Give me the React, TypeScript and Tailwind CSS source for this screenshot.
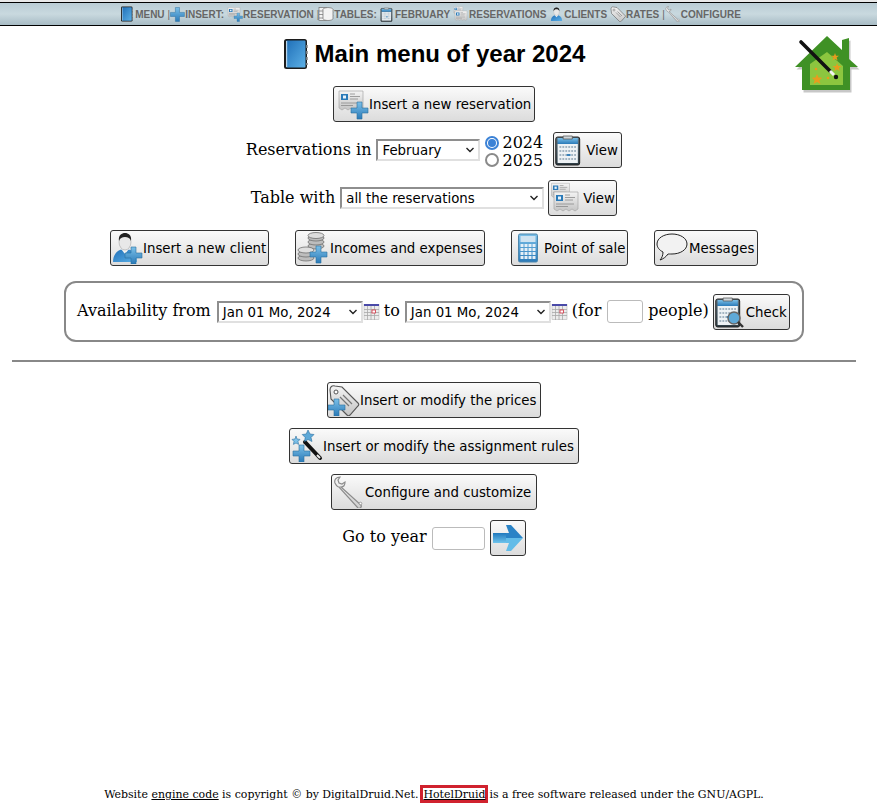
import React from "react";

type P = { s?: number; className?: string };

const Defs = () => (
  <svg width="0" height="0" className="absolute">
    <defs>
      <linearGradient id="blue" x1="0" y1="0" x2="0" y2="1">
        <stop offset="0" stopColor="#7cc0e8" />
        <stop offset="1" stopColor="#2a7ab8" />
      </linearGradient>
      <linearGradient id="book" x1="0" y1="0" x2="1" y2="1">
        <stop offset="0" stopColor="#1f6fb8" />
        <stop offset="1" stopColor="#5cb0e6" />
      </linearGradient>
      <linearGradient id="paper" x1="0" y1="0" x2="0" y2="1">
        <stop offset="0" stopColor="#f4f4f4" />
        <stop offset="1" stopColor="#c4c4c4" />
      </linearGradient>
      <linearGradient id="steel" x1="0" y1="0" x2="1" y2="1">
        <stop offset="0" stopColor="#f6f6f6" />
        <stop offset="1" stopColor="#cdcdcd" />
      </linearGradient>
      <linearGradient id="arrowG" x1="0" y1="0" x2="0" y2="1">
        <stop offset="0" stopColor="#1f78bd" />
        <stop offset="1" stopColor="#6fc4ec" />
      </linearGradient>
      <linearGradient id="body" x1="0" y1="0" x2="0" y2="1">
        <stop offset="0" stopColor="#5f7480" />
        <stop offset="1" stopColor="#2e3c44" />
      </linearGradient>
    </defs>
  </svg>
);

const Svg = ({ s = 32, className, children }: P & { children: React.ReactNode }) => (
  <svg width={s} height={s} viewBox="0 0 32 32" className={"shrink-0 " + (className ?? "")}>
    {children}
  </svg>
);

const Plus = ({ x = 0, y = 0, k = 1 }: { x?: number; y?: number; k?: number }) => (
  <g transform={`translate(${x} ${y}) scale(${k})`}>
    <path
      d="M6 0h5v6h6v5h-6v6H6v-6H0V6h6z"
      fill="url(#blue)"
      stroke="#2a6f9f"
      strokeWidth="0.6"
    />
  </g>
);

const Ticket = ({ x = 0, y = 0 }: { x?: number; y?: number }) => (
  <g transform={`translate(${x} ${y})`}>
    <path
      d="M1 1h24v17l-3 2-3-2-3 2-3-2-3 2-3-2-3 2-3-2z"
      fill="url(#paper)"
      stroke="#a8a8a8"
      strokeWidth="0.7"
    />
    <rect x="3" y="4" width="7" height="6" fill="#2a7ab8" />
    <rect x="5" y="5.5" width="3" height="3" fill="#e8f2fa" />
    <path d="M12 4h5M12 6.5h10M12 9h8M3 13h18M3 15.5h12" stroke="#8a8a8a" strokeWidth="0.8" />
  </g>
);

const BookGlyph = () => (
  <>
    <rect x="4" y="1" width="23" height="30" rx="2.5" fill="#1c1c1c" />
    <rect x="6" y="2.5" width="19.5" height="27" rx="1" fill="url(#book)" />
    <path d="M6.600 3v26" stroke="#b8d6ec" strokeWidth="1.2" />
    <path d="M27 7v3M27 13v3M27 19v3M27 25v2" stroke="#8d8d8d" strokeWidth="1.6" />
  </>
);
const IconBook = (p: P) => <Svg {...p}><BookGlyph /></Svg>;
const IconPlus = (p: P) => <Svg {...p}><Plus x={1} y={1} k={1.75} /></Svg>;

const IconNewRes = (p: P) => (
  <Svg {...p}>
    <Ticket x={1} y={2} />
    <Plus x={14} y={14} />
  </Svg>
);

const IconRes = (p: P) => (
  <Svg {...p}>
    <g transform="translate(0 -1) scale(.75)"><Ticket x={1} y={2} /></g>
    <Ticket x={3} y={9} />
  </Svg>
);

const IconTable = (p: P) => (
  <Svg {...p}>
    <g fill="#f3f3f3" stroke="#6f6f6f" strokeWidth="1.400">
      <rect x="2" y="3" width="15" height="26" />
      <ellipse cx="20" cy="7" rx="10" ry="4" />
      <path d="M10 7v6c0 2 4 4 10 4s10-2 10-4V7" />
      <path d="M10 13v6c0 2 4 4 10 4s10-2 10-4v-6" />
      <path d="M10 19v6c0 2 4 4 10 4s10-2 10-4v-6" />
      <path d="M2 10h8M2 17h8M2 24h8" />
    </g>
  </Svg>
);

const IconClip = ({ mag, ...p }: P & { mag?: boolean }) => (
  <Svg {...p}>
    <g transform="translate(-1 0) scale(.92 1)">
      <rect x="3" y="3" width="26" height="28" rx="2" fill="url(#body)" stroke="#1d1d1d" />
      <rect x="5" y="10" width="22" height="19" fill="#eef2f5" />
      <path d="M5 4h22v6H5z" fill="url(#blue)" />
      <path d="M11 5V2h10v3z" fill="#cfd6da" stroke="#555" strokeWidth="0.8" />
      <g stroke="#8aa0b0" strokeWidth="1.6" strokeDasharray="2 1.2">
        <path d="M7 13h18M7 17h18M7 21h18M7 25h18" />
      </g>
      <path d="M15 21h4" stroke="#2a7ab8" strokeWidth="1.8" />
    </g>
    {mag && (
      <>
        <circle cx="20" cy="22" r="6" fill="#5ea9d8" stroke="#666" strokeWidth="1.5" />
        <path d="M24 26l5 5" stroke="#333" strokeWidth="2.4" />
      </>
    )}
  </Svg>
);

const Person = () => (
  <>
    <path d="M2 30c0-8 5-13 12-13s12 5 12 13z" fill="url(#book)" />
    <path d="M10 17l4 5 4-5z" fill="#f2f2f2" />
    <ellipse cx="14" cy="10" rx="6" ry="8" fill="#e8e8e8" stroke="#999" strokeWidth="0.5" />
    <path d="M8 9c-1-6 3-8 6-8s7 2 6 8c-1-3-3-4-6-4s-5 1-6 4z" fill="#222" />
  </>
);
const IconNewClient = (p: P) => (
  <Svg {...p}>
    <Person />
    <Plus x={14} y={15} />
  </Svg>
);
const IconClient = (p: P) => <Svg {...p}><g transform="translate(2 0)"><Person /></g></Svg>;

const TagGlyph = () => (
  <g>
    <path
      d="M2 6c0-3 2-5 5-4l7 1 16 16c1 1 1 2 0 3l-8 9c-1 1-2 1-3 0L3 15z"
      fill="url(#paper)"
      stroke="#555"
      strokeWidth="1.100"
    />
    <circle cx="8" cy="8" r="2" fill="#fff" stroke="#555" />
    <path d="M12 13l9 9M15 11l9 9" stroke="#777" strokeWidth="1.2" />
  </g>
);
const IconTag = (p: P) => <Svg {...p}><TagGlyph /></Svg>;
const IconNewTag = (p: P) => (
  <Svg {...p}>
    <TagGlyph />
    <Plus x={0} y={15} />
  </Svg>
);

const IconWrench = (p: P) => (
  <Svg {...p}>
    <path
      d="M2 7c-1-3 1-6 5-6L5 4l1 3 3 1 3-2c0 3-1 5-4 5l20 18c1 2-1 4-3 3L6 11C4 11 3 9 2 7z"
      fill="url(#steel)"
      stroke="#8c8c8c"
      strokeWidth="1.200"
    />
    <circle cx="27.500" cy="27.500" r="1.300" fill="#fff" stroke="#8c8c8c" strokeWidth="0.8" />
  </Svg>
);

const IconCoins = (p: P) => (
  <Svg {...p}>
    <g fill="#bdbdbd" stroke="#6f6f6f" strokeWidth="0.8">
      <ellipse cx="19" cy="14" rx="8" ry="3" />
      <ellipse cx="19" cy="10" rx="8" ry="3" />
      <ellipse cx="19" cy="6" rx="8" ry="3" />
      <ellipse cx="19" cy="3.5" rx="8" ry="3" fill="#dedede" />
      <ellipse cx="9" cy="26" rx="8" ry="3" />
      <ellipse cx="9" cy="22" rx="8" ry="3" />
      <ellipse cx="9" cy="18" rx="8" ry="3" fill="#dedede" />
    </g>
    <Plus x={13} y={14} />
  </Svg>
);

const IconCalc = (p: P) => (
  <Svg {...p}>
    <rect x="6.500" y="2" width="19" height="28" rx="1.5" fill="url(#blue)" stroke="#4d87ad" />
    <rect x="8.500" y="4" width="15" height="6" fill="#cfe3f1" />
    <g fill="#e6f0f7">
      {[12, 16, 20, 24].map((y) =>
        [8.5, 12.5, 16.5, 20.5].map((x) => <rect key={x + "-" + y} x={x} y={y} width="3" height="3" />)
      )}
    </g>
  </Svg>
);

const IconBubble = (p: P) => (
  <Svg {...p}>
    <path
      d="M16 2c8 0 15 4 15 10s-7 10-15 10c-2 0-3 0-4 0-2 3-5 5-8 6 2-2 3-5 3-8C3 18 1 15 1 12 1 6 8 2 16 2z"
      fill="#f2f2f2"
      stroke="#222"
      strokeWidth="1"
    />
  </Svg>
);

const IconRules = (p: P) => (
  <Svg {...p}>
    <path d="M14 12l15 16" stroke="#111" strokeWidth="4" strokeLinecap="round" />
    <path d="M26 25l3 3" stroke="#eee" strokeWidth="2" />
    <path
      d="M17 0l2 4 4 .5-3 3 1 4-4-2-3.500 2 .7-4-3-3 4-.5z"
      fill="#5ea9d8"
      stroke="#2a6f9f"
      strokeWidth="0.6"
    />
    <path
      d="M5 6l1 3 3 .4-2 2 .6 3-2.600-1.400L2.400 14.400 3 11.400l-2-2 3-.4z"
      fill="#7cc0e8"
      stroke="#2a6f9f"
      strokeWidth="0.6"
    />
    <Plus x={2} y={15} />
  </Svg>
);

const IconArrow = (p: P) => (
  <Svg {...p}>
    <path d="M1 11h16l-3-8h5l12 13H1z" fill="#2a83c6" />
    <path d="M1 16h30L19 29h-5l3-8H1z" fill="#62bce8" />
    <path d="M1 11h13v10H1z" fill="url(#arrowG)" />
  </Svg>
);

const IconCal = () => (
  <svg width="17" height="17" viewBox="0 0 17 17" className="shrink-0">
    <rect x="1" y="1.500" width="15" height="15" fill="#ececec" stroke="#aaa" strokeWidth="0.5" />
    <rect x="1" y="1" width="15" height="2" fill="#4a4aa8" />
    <path
      d="M1 6.500h15M1 9.500h15M1 12.500h15M4.500 3v14M8 3v14M11.500 3v14"
      stroke="#a8a8a8"
      strokeWidth="0.8"
    />
    <rect x="9" y="7" width="3.500" height="3" fill="#fff" stroke="#d03040" strokeWidth="0.8" />
  </svg>
);

const Logo = () => (
  <svg width="68" height="62" viewBox="0 0 68 62" className="absolute left-[794px] top-[35px]">
    <path d="M1 32L33 1l15 14V5l7-2v21l9 8h-8v23H8V32z" fill="#000" opacity=".22" transform="translate(1.500 2.500)" />
    <path d="M1 32L33 1l15 14V5l7-2v21l9 8h-8v23H8V32z" fill="#3f9125" />
    <path d="M33 17l16 14v19H16V29z" fill="#8cc63f" />
    <g fill="#e89c1e">
      <path d="M23 39l1.500 3.500 3.800.3-2.900 2.400 1 3.800-3.400-2-3.400 2 1-3.800-2.900-2.400 3.800-.3z" />
      <path d="M41 18l1 2.800h3l-2.400 1.800 1 2.900-2.600-1.800-2.600 1.800 1-2.900-2.400-1.800h3z" />
      <path d="M43 28l1.200 3h3.300l-2.700 2 1 3.200-2.800-2-2.800 2 1-3.200-2.700-2H42z" />
      <circle cx="22" cy="34" r="1.300" />
      <circle cx="34" cy="43" r="1.300" />
    </g>
    <path d="M7 7l29 29" stroke="#111" strokeWidth="3.600" strokeLinecap="round" />
    <path d="M36 36l4 4" stroke="#f2f2f2" strokeWidth="3" />
    <circle cx="42" cy="42" r="2.200" fill="#111" />
  </svg>
);

const Btn = ({
  icon,
  box = "w-[32px]",
  children,
  className = "",
}: {
  icon: React.ReactNode;
  box?: string;
  children?: React.ReactNode;
  className?: string;
}) => (
  <button
    className={
      "flex items-center h-9 border border-[#333] rounded-[3px] bg-gradient-to-b from-[#fafafa] to-[#dcdcdc] text-[13.33px] text-black whitespace-nowrap shrink-0 font-['DejaVu_Sans',sans-serif] " +
      className
    }
  >
    <span className={"flex items-center justify-center shrink-0 " + box}>{icon}</span>
    {children && <span className="translate-y-px">{children}</span>}
  </button>
);

const Sel = ({ children, className = "" }: { children: string; className?: string }) => (
  <span
    className={
      "flex items-center justify-between h-[22px] pl-[4px] pr-[3px] border-2 border-t-[#8e8e8e] border-l-[#8e8e8e] border-r-[#e0e0e0] border-b-[#e0e0e0] bg-white text-[13.33px] text-black shrink-0 font-['DejaVu_Sans',sans-serif] " +
      className
    }
  >
    <span className="translate-y-px">{children}</span>
    <svg width="10" height="6" viewBox="0 0 10 6">
      <path d="M1.500 1l3.500 3.500L8.500 1" fill="none" stroke="#222" strokeWidth="1.400" />
    </svg>
  </span>
);

const NavItem = ({
  icon,
  label,
  sep,
  className = "",
}: {
  icon: React.ReactNode;
  label: string;
  sep?: boolean;
  className?: string;
}) => (
  <span className={"flex items-center " + className}>
    {icon}
    <span>{label}</span>
    {sep && <span className="ml-[3px] font-normal">|</span>}
  </span>
);

const Input = ({ className = "" }: { className?: string }) => (
  <span className={"block h-[23px] border border-[#bbb] rounded-[3px] bg-white shrink-0 " + className} />
);

export default function App() {
  return (
    <div className="relative min-h-[810px] bg-white font-['DejaVu_Serif',serif] text-base text-black flex flex-col">
      <Defs />
      <div className="bg-[#e8e8e8] pt-[2px]">
        <nav className="h-[24px] border-y border-black bg-gradient-to-b from-[#b9ccd4] via-[#c9d9df] to-[#a8bcc5] flex items-center justify-center pr-[17px] font-['Liberation_Sans',sans-serif] font-bold text-[10px] text-[#666]">
          <NavItem icon={<IconBook s={16} />} label="MENU" sep />
          <NavItem icon={<IconPlus s={15} />} label="INSERT:" />
          <NavItem icon={<IconNewRes s={16} />} label="RESERVATION" sep className="ml-[3px]" />
          <NavItem icon={<IconTable s={16} />} label="TABLES:" className="-ml-[1px]" />
          <NavItem icon={<IconClip s={15} />} label="FEBRUARY" className="ml-[3px]" />
          <NavItem icon={<IconRes s={16} />} label="RESERVATIONS" className="ml-[3px]" />
          <NavItem icon={<IconClient s={15} />} label="CLIENTS" className="ml-[3px]" />
          <NavItem icon={<IconTag s={16} />} label="RATES" sep className="ml-[3px]" />
          <NavItem icon={<IconWrench s={16} />} label="CONFIGURE" />
        </nav>
      </div>

      <Logo />

      <main className="w-[868px] flex-1 flex flex-col items-center">
        <h1 className="mt-[12px] h-[32px] flex items-center gap-[3px] font-['Liberation_Sans',sans-serif] font-bold text-2xl">
          <IconBook s={32} className="-ml-[3px]" />
          Main menu of year 2024
        </h1>

        <div className="mt-[16px] flex">
          <Btn icon={<IconNewRes />} box="w-[35px] pl-[3px]" className="w-[202px]">Insert a new reservation</Btn>
        </div>

        <div className="mt-[10px] flex items-center h-9">
          <span>Reservations in</span>
          <Sel className="w-[104px] ml-[5px]">February</Sel>
          <span className="flex flex-col ml-[5px] leading-[17px] mt-[3px]">
            <span className="flex items-center gap-[3px]">
              <span className="w-[14px] h-[14px] rounded-full border-2 border-[#3b82d6] flex items-center justify-center">
                <span className="w-[8px] h-[8px] rounded-full bg-[#3b82d6]" />
              </span>
              <span className="-translate-y-px">2024</span>
            </span>
            <span className="flex items-center gap-[3px]">
              <span className="w-[14px] h-[14px] rounded-full border-2 border-[#8a8a8a]" />
              2025
            </span>
          </span>
          <Btn icon={<IconClip />} className="ml-[10px] w-[69px]">View</Btn>
        </div>

        <div className="mt-[12px] flex items-center h-9">
          <span>Table with</span>
          <Sel className="w-[204px] ml-[5px]">all the reservations</Sel>
          <Btn icon={<IconRes />} box="w-[34px]" className="ml-[4px] w-[69px]">View</Btn>
        </div>

        <div className="mt-[14px] flex items-center gap-[26px]">
          <Btn icon={<IconNewClient />} className="w-[159px]">Insert a new client</Btn>
          <Btn icon={<IconCoins />} box="w-[34px]" className="w-[190px]">Incomes and expenses</Btn>
          <Btn icon={<IconCalc />} className="w-[117px]">Point of sale</Btn>
          <Btn icon={<IconBubble />} box="w-[34px]" className="w-[104px]">Messages</Btn>
        </div>

        <div className="mt-[15px] w-[740px] h-[61px] border-2 border-[#888] rounded-[12px] flex items-center pl-[11px]">
          <span className="-translate-y-px">Availability from</span>
          <Sel className="w-[146px] ml-[6px]">Jan 01 Mo, 2024</Sel>
          <IconCal />
          <span className="ml-[4px] -translate-y-px">to</span>
          <Sel className="w-[146px] ml-[5px]">Jan 01 Mo, 2024</Sel>
          <IconCal />
          <span className="ml-[4px] -translate-y-px">(for</span>
          <Input className="w-[36px] ml-[6px]" />
          <span className="ml-[5px] -translate-y-px">people)</span>
          <Btn icon={<IconClip mag />} className="ml-[4px] w-[77px]">Check</Btn>
        </div>

        <hr className="mt-[18px] w-[844px] border-t-2 border-[#888]" />

        <div className="mt-[20px] flex">
          <Btn icon={<IconNewTag />} className="w-[214px]">Insert or modify the prices</Btn>
        </div>
        <div className="mt-[10px] flex">
          <Btn icon={<IconRules />} box="w-[33px]" className="w-[290px]">Insert or modify the assignment rules</Btn>
        </div>
        <div className="mt-[10px] flex">
          <Btn icon={<IconWrench />} box="w-[33px]" className="w-[206px]">Configure and customize</Btn>
        </div>

        <div className="mt-[10px] flex items-center h-9">
          <span className="-translate-y-px">Go to year</span>
          <Input className="w-[53px] ml-[5px]" />
          <Btn icon={<IconArrow />} box="w-[34px]" className="ml-[5px] w-[36px]" />
        </div>

        <footer className="mt-auto mb-[7px] flex items-center text-[10.95px] h-[18px] whitespace-pre">
          <span className="translate-y-px">Website <span className="underline">engine code</span> is copyright © by DigitalDruid.Net.</span>
          <span className="ml-[2px] mr-[1px] border-[3px] border-[#d0222e] h-[18px] flex items-center underline">
            <span className="translate-y-px">HotelDruid</span>
          </span>
          <span className="translate-y-px">is a free software released under the GNU/AGPL.</span>
        </footer>
      </main>
    </div>
  );
}
